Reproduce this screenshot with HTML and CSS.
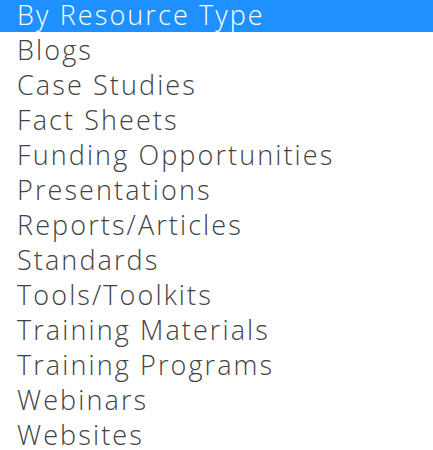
FILE: index.html
```html
<!DOCTYPE html>
<html lang="en">
  <head>
    <meta charset="UTF-8" />
    <title>Resource Type</title>
    <link rel="stylesheet" href="styles.css">
  </head>
  <body>
    <ul class="options">
      <li class="selected">By Resource Type</li>
      <li>Blogs</li>
      <li>Case Studies</li>
      <li>Fact Sheets</li>
      <li>Funding Opportunities</li>
      <li>Presentations</li>
      <li>Reports/Articles</li>
      <li>Standards</li>
      <li>Tools/Toolkits</li>
      <li>Training Materials</li>
      <li>Training Programs</li>
      <li>Webinars</li>
      <li>Websites</li>
    </ul>
  </body>
</html>
```

FILE: styles.css
```css
* {
  box-sizing: border-box;
  margin: 0;
  padding: 0;
}

body {
  background-color: #fff;
  font-family: "Open Sans", "Noto Sans", sans-serif;
}

.options {
  list-style: none;
}

.options li {
  height: 35px;
  line-height: 30px;
  padding: 3px 0 2px 17px;
  font-size: 27px;
  font-weight: 360;
  letter-spacing: 2.1px;
  color: #424242;
  white-space: nowrap;
}

.options li.selected {
  height: 32px;
  padding-top: 0;
  background-color: #1e90ff;
  color: #fff;
}
```
